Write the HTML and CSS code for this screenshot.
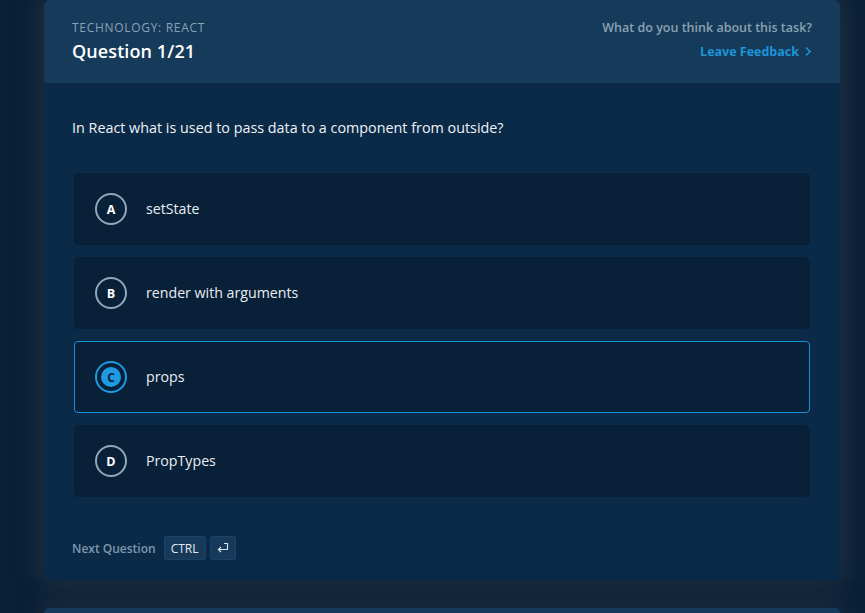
FILE: index.html
```html
<!DOCTYPE html>
<html>
<head>
<meta charset="utf-8">
<link rel="stylesheet" href="styles.css">
</head>
<body>
<div class="page">
  <section class="card">
    <header class="card-head">
      <div class="head-left">
        <div class="tech">TECHNOLOGY: REACT</div>
        <div class="qnum">Question 1/21</div>
      </div>
      <div class="head-right">
        <div class="ask">What do you think about this task?</div>
        <a class="feedback">Leave Feedback
          <svg width="8" height="11" viewBox="0 0 8 11"><path d="M2 1.5 L6 5.5 L2 9.5" fill="none" stroke="currentColor" stroke-width="1.6"/></svg>
        </a>
      </div>
    </header>
    <div class="card-body">
      <p class="question">In React what is used to pass data to a component from outside?</p>
      <div class="options">
        <div class="option"><span class="badge">A</span><span class="label">setState</span></div>
        <div class="option"><span class="badge">B</span><span class="label">render with arguments</span></div>
        <div class="option selected"><span class="badge"><span class="inner">C</span></span><span class="label">props</span></div>
        <div class="option"><span class="badge">D</span><span class="label">PropTypes</span></div>
      </div>
      <div class="next">
        <span class="next-label">Next Question</span>
        <span class="key">CTRL</span>
        <span class="key key-enter"><svg width="14" height="12" viewBox="0 0 14 12"><path d="M8 1.5 H11.5 V7.5 H2.5 M5 5 L2.5 7.5 L5 10" fill="none" stroke="#d7e2ea" stroke-width="1.2"/></svg></span>
      </div>
    </div>
  </section>
  <section class="card card-next"></section>
</div>
</body>
</html>
```
FILE: styles.css
```css
html, body {
  margin: 0;
  padding: 0;
  background: #0a2037;
  height: 100%;
  overflow: hidden;
}
body {
  font-family: "Open Sans", "Noto Sans", sans-serif;
  color: #e8eef3;
}
.page {
  padding: 0 25px 0 44px;
  display: flex;
  flex-direction: column;
  gap: 28px;
}
.card {
  width: 796px;
  border-radius: 6px;
  overflow: hidden;
  background: #0b2a48;
  box-shadow: 0 0 22px 6px rgba(48, 58, 72, 0.55);
}
.card-head {
  background: #163a59;
  height: 83px;
  box-sizing: border-box;
  padding: 19px 28px 0 28px;
  display: flex;
  justify-content: space-between;
}
.tech {
  font-size: 12px;
  font-weight: 500;
  letter-spacing: 0.7px;
  color: #8aa2b4;
  line-height: 17px;
}
.qnum {
  font-size: 18px;
  font-weight: 600;
  letter-spacing: 0.1px;
  color: #ffffff;
  line-height: 24px;
  margin-top: 3px;
}
.head-right {
  text-align: right;
}
.ask {
  font-size: 12.5px;
  font-weight: 600;
  color: #8aa2b4;
  line-height: 17px;
}
.feedback {
  display: inline-flex;
  align-items: center;
  gap: 5px;
  margin-top: 7px;
  font-size: 12.5px;
  font-weight: 700;
  color: #1c95da;
  line-height: 17px;
}
.card-body {
  padding: 35px 28px 20px 28px;
}
.question {
  margin: 0;
  font-size: 14.35px;
  line-height: 19px;
  color: #eef3f7;
}
.options {
  display: flex;
  flex-direction: column;
  gap: 12px;
  margin: 36px 2px 0 2px;
}
.option {
  height: 72px;
  box-sizing: border-box;
  background: #082038;
  border: 1px solid #082038;
  border-radius: 4px;
  display: flex;
  align-items: center;
  padding-left: 20px;
}
.option.selected {
  border-color: #1b8fd6;
}
.badge {
  width: 32px;
  height: 32px;
  box-sizing: border-box;
  border: 2px solid #8fa8ba;
  border-radius: 50%;
  display: flex;
  align-items: center;
  justify-content: center;
  font-size: 12.5px;
  font-weight: 700;
  color: #ffffff;
}
.selected .badge {
  border-color: #1c9ae2;
}
.inner {
  width: 20px;
  height: 20px;
  border-radius: 50%;
  background: #1c9ae2;
  color: #0a2038;
  display: flex;
  align-items: center;
  justify-content: center;
  font-size: 12px;
  font-weight: 700;
}
.label {
  margin-left: 19px;
  margin-bottom: 2px;
  font-size: 14.2px;
  color: #e8eef3;
}
.next {
  display: flex;
  align-items: center;
  margin-top: 39px;
  height: 24px;
}
.next-label {
  font-size: 12px;
  font-weight: 600;
  color: #7f98ac;
  margin-right: 8px;
}
.key {
  height: 24px;
  box-sizing: border-box;
  background: #173a5a;
  border: 1px solid #1d4264;
  border-radius: 2px;
  display: flex;
  align-items: center;
  justify-content: center;
  font-size: 12px;
  color: #e2ebf1;
  padding: 0 6px;
  margin-right: 4px;
}
.key-enter {
  width: 26px;
  padding: 0;
}
.card-next {
  height: 5px;
  border-radius: 6px 6px 0 0;
  background: #163a59;
}
```
